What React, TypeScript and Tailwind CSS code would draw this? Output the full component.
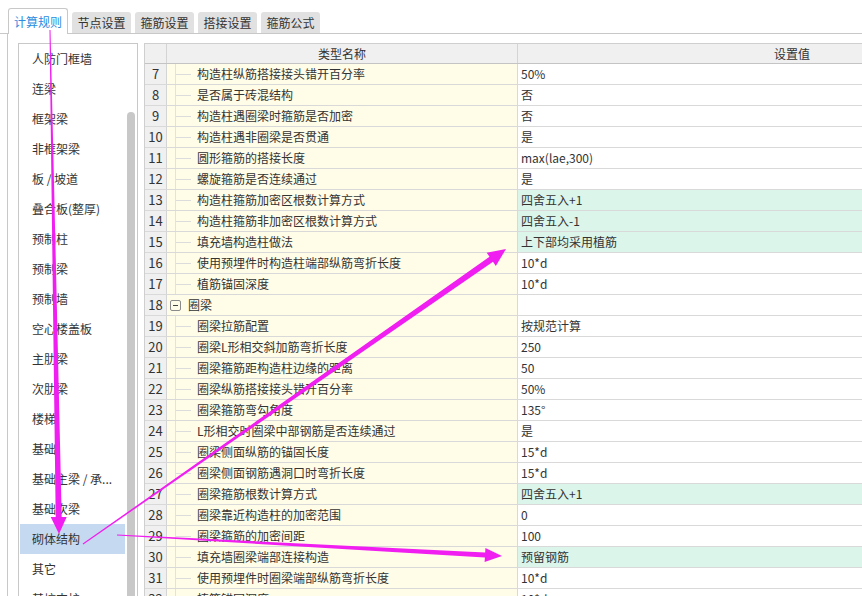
import React from 'react'

type Row = {
  no: number
  name: string
  value: string
  group?: boolean
  green?: boolean
}

const tabs = ['计算规则', '节点设置', '箍筋设置', '搭接设置', '箍筋公式']

const categories = [
  '人防门框墙',
  '连梁',
  '框架梁',
  '非框架梁',
  '板 / 坡道',
  '叠合板(整厚)',
  '预制柱',
  '预制梁',
  '预制墙',
  '空心楼盖板',
  '主肋梁',
  '次肋梁',
  '楼梯',
  '基础',
  '基础主梁 / 承...',
  '基础次梁',
  '砌体结构',
  '其它',
  '基坑支护',
]

const rows: Row[] = [
  { no: 7, name: '构造柱纵筋搭接接头错开百分率', value: '50%' },
  { no: 8, name: '是否属于砖混结构', value: '否' },
  { no: 9, name: '构造柱遇圈梁时箍筋是否加密', value: '否' },
  { no: 10, name: '构造柱遇非圈梁是否贯通', value: '是' },
  { no: 11, name: '圆形箍筋的搭接长度', value: 'max(lae,300)' },
  { no: 12, name: '螺旋箍筋是否连续通过', value: '是' },
  { no: 13, name: '构造柱箍筋加密区根数计算方式', value: '四舍五入+1', green: true },
  { no: 14, name: '构造柱箍筋非加密区根数计算方式', value: '四舍五入-1', green: true },
  { no: 15, name: '填充墙构造柱做法', value: '上下部均采用植筋', green: true },
  { no: 16, name: '使用预埋件时构造柱端部纵筋弯折长度', value: '10*d' },
  { no: 17, name: '植筋锚固深度', value: '10*d' },
  { no: 18, name: '圈梁', value: '', group: true },
  { no: 19, name: '圈梁拉筋配置', value: '按规范计算' },
  { no: 20, name: '圈梁L形相交斜加筋弯折长度', value: '250' },
  { no: 21, name: '圈梁箍筋距构造柱边缘的距离', value: '50' },
  { no: 22, name: '圈梁纵筋搭接接头错开百分率', value: '50%' },
  { no: 23, name: '圈梁箍筋弯勾角度', value: '135°' },
  { no: 24, name: 'L形相交时圈梁中部钢筋是否连续通过', value: '是' },
  { no: 25, name: '圈梁侧面纵筋的锚固长度', value: '15*d' },
  { no: 26, name: '圈梁侧面钢筋遇洞口时弯折长度', value: '15*d' },
  { no: 27, name: '圈梁箍筋根数计算方式', value: '四舍五入+1', green: true },
  { no: 28, name: '圈梁靠近构造柱的加密范围', value: '0' },
  { no: 29, name: '圈梁箍筋的加密间距', value: '100' },
  { no: 30, name: '填充墙圈梁端部连接构造', value: '预留钢筋', green: true },
  { no: 31, name: '使用预埋件时圈梁端部纵筋弯折长度', value: '10*d' },
  { no: 32, name: '植筋锚固深度', value: '10*d' },
]

// tapered annotation arrow: thin tail, thick shaft, triangular head
const arrow = (
  x1: number,
  y1: number,
  x2: number,
  y2: number,
  w0: number,
  w1: number,
  headLen: number,
  headW: number
) => {
  const len = Math.hypot(x2 - x1, y2 - y1)
  const dx = (x2 - x1) / len
  const dy = (y2 - y1) / len
  const nx = -dy
  const ny = dx
  const bx = x2 - dx * headLen
  const by = y2 - dy * headLen
  const pts = [
    [x1 + (nx * w0) / 2, y1 + (ny * w0) / 2],
    [bx + (nx * w1) / 2, by + (ny * w1) / 2],
    [bx + (nx * headW) / 2, by + (ny * headW) / 2],
    [x2, y2],
    [bx - (nx * headW) / 2, by - (ny * headW) / 2],
    [bx - (nx * w1) / 2, by - (ny * w1) / 2],
    [x1 - (nx * w0) / 2, y1 - (ny * w0) / 2],
  ]
  return pts.map((p) => `${p[0].toFixed(1)},${p[1].toFixed(1)}`).join(' ')
}

const App: React.FC = () => {
  return (
    <div
      className="relative w-[862px] h-[596px] overflow-hidden bg-white text-[12px] text-[#333]"
      style={{ fontFamily: '"Noto Sans CJK SC", "Noto Sans", sans-serif' }}
    >
      {/* tabs */}
      <div className="flex items-end h-[34px] pl-[8px] border-b border-[#c8c8c8]">
        {tabs.map((tab, i) =>
          i === 0 ? (
            <div
              key={tab}
              className="h-[26px] w-[60px] -mb-px flex items-center justify-center bg-white border border-b-0 border-[#c8c8c8] rounded-t-[3px] text-[#2b8ce0]"
            >
              {tab}
            </div>
          ) : (
            <div
              key={tab}
              className="h-[21px] w-[59px] ml-[4px] flex items-center justify-center bg-[#e1e1e1] rounded-t-[3px] text-[#333]"
            >
              {tab}
            </div>
          )
        )}
      </div>

      {/* body */}
      <div className="flex ml-[7px] pl-[10px] pt-[9px] border-l border-[#c8c8c8] h-[562px]">
        {/* category list */}
        <div className="flex w-[120px] shrink-0 border border-[#c8c8c8] border-b-0 bg-white">
          <div className="w-[106px] pl-px">
            {categories.map((c) => (
              <div
                key={c}
                className={
                  'h-[30px] flex items-center pl-[12px] whitespace-nowrap ' +
                  (c === '砌体结构' ? 'bg-[#c5daf0]' : '')
                }
              >
                {c}
              </div>
            ))}
          </div>
          <div className="flex-1 flex justify-center pt-[68px]">
            <div className="w-[8px] h-[500px] rounded-t-full bg-[#c8c8c8]" />
          </div>
        </div>

        {/* settings table */}
        <div className="ml-[6px] flex-1 overflow-hidden">
          <div className="w-[922px] border-l border-t border-[#cfcfcf]">
            <div className="flex h-[20px] bg-[#f0f0f0] border-b border-[#c4c4c4]">
              <div className="w-[22px] border-r border-[#d4d4d4]" />
              <div className="w-[351px] border-r border-[#d4d4d4] flex items-center justify-center">
                类型名称
              </div>
              <div className="flex-1 flex items-center justify-center">设置值</div>
            </div>
            {rows.map((r) => (
              <div key={r.no} className="flex h-[21px] border-b border-[#d9d9d9]">
                <div className="w-[22px] shrink-0 bg-[#f0f0f0] border-r border-[#d4d4d4] flex items-center justify-center text-[13px]">
                  {r.no}
                </div>
                <div className="w-[351px] shrink-0 bg-[#fffde8] border-r border-[#d9d9d9] flex items-center">
                  {r.group ? (
                    <>
                      <div className="ml-[3px] w-[11px] h-[11px] border border-[#8a8a8a] rounded-[2px] flex items-center justify-center">
                        <div className="w-[5px] h-px bg-[#444]" />
                      </div>
                      <span className="ml-[7px]">{r.name}</span>
                    </>
                  ) : (
                    <>
                      <div className="ml-[8px] w-px self-stretch bg-[#e2e2e2]" />
                      <div className="w-[15px] h-px bg-[#dcdcdc]" />
                      <span className="ml-[6px] whitespace-nowrap">{r.name}</span>
                    </>
                  )}
                </div>
                <div
                  className={
                    'flex-1 flex items-center pl-[3px] ' +
                    (r.green ? 'bg-[#dcf5eb]' : 'bg-white')
                  }
                >
                  {r.value}
                </div>
              </div>
            ))}
          </div>
        </div>
      </div>

      {/* annotation arrows */}
      <svg className="absolute inset-0 pointer-events-none" width={862} height={596}>
        <g fill="#f01ef0">
          <polygon points={arrow(50, 30, 59, 534, 1, 6, 17, 16)} />
          <polygon points={arrow(83, 544, 506, 249, 1, 6, 18, 16)} />
          <polygon points={arrow(117, 535, 502, 556, 1, 5, 17, 14)} />
        </g>
      </svg>
    </div>
  )
}

export default App
